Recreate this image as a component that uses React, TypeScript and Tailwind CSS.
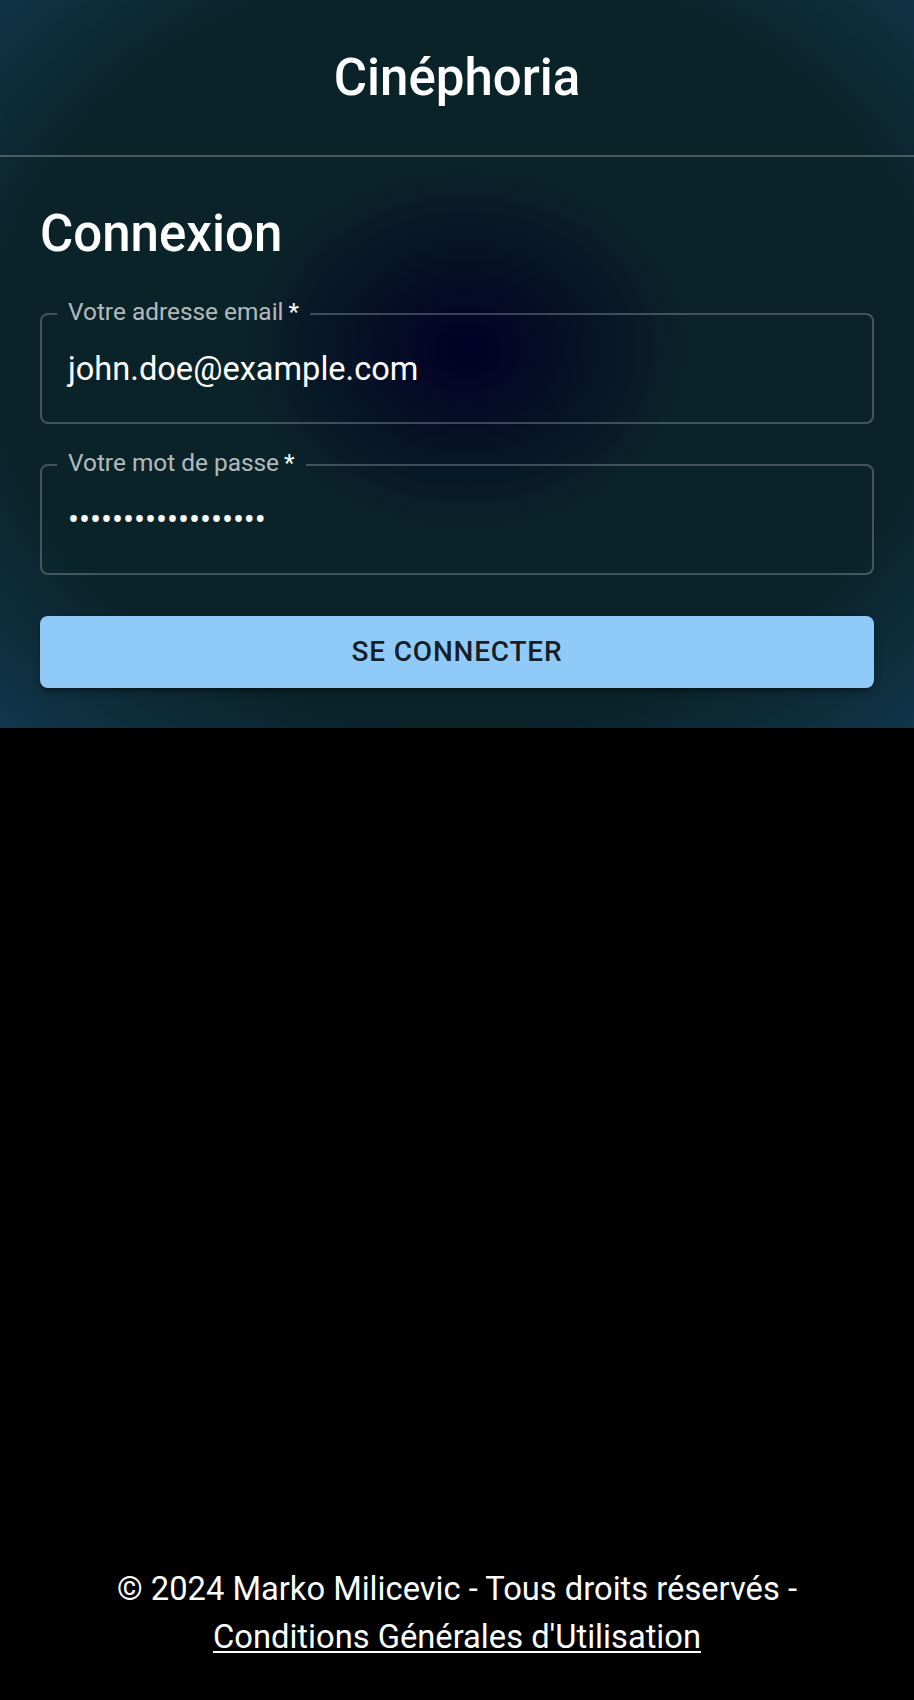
import React from "react";

function Field({ label, value }: { label: string; value: string }) {
  return (
    <fieldset className="m-0 min-w-0 border-2 border-[rgba(255,255,255,0.23)] rounded-[8px] px-[15px] pt-[19px] pb-[29px]">
      <legend className="px-[11px] text-[24.4px] leading-[24px] text-[rgba(255,255,255,0.7)]">
        <span className="relative top-[-2px]">
          {label}
          <span className="text-white">{"\u2009*"}</span>
        </span>
      </legend>
      <div className="pl-[11px] text-[32.6px] leading-[48px] text-white whitespace-nowrap">{value}</div>
    </fieldset>
  );
}

export default function App() {
  return (
    <div className="min-h-screen flex flex-col bg-black text-white font-['Roboto',sans-serif]">
      <div className="bg-[radial-gradient(ellipse_at_51%_48%,#020024_0%,#0a2329_34%,#0a2329_70%,#12364c_100%)]">
        <header className="h-[157px] border-b-2 border-[rgba(255,255,255,0.25)] flex items-center justify-center">
          <h1 className="text-[51px] leading-[64px] font-medium">Cinéphoria</h1>
        </header>
        <main className="px-[40px] pt-[45px] pb-[40px]">
          <h2 className="text-[51px] leading-[64px] font-medium">Connexion</h2>
          <div className="mt-[36px]">
            <Field label="Votre adresse email" value="john.doe@example.com" />
          </div>
          <div className="mt-[29px]">
            <Field label="Votre mot de passe" value={"\u2022".repeat(18)} />
          </div>
          <button
            type="button"
            className="mt-[41px] w-full h-[72px] rounded-[8px] bg-[#90caf9] text-[rgba(0,0,0,0.87)] text-[28px] font-medium uppercase tracking-[0.8px] flex items-center justify-center shadow-[0_6px_2px_-4px_rgba(0,0,0,0.2),0_4px_4px_0_rgba(0,0,0,0.14),0_2px_10px_0_rgba(0,0,0,0.12)]"
          >
            Se connecter
          </button>
        </main>
      </div>
      <div className="flex-1" />
      <footer className="px-[40px] pb-[39px] text-center text-[32.7px] leading-[48px] text-white">
        <span>© 2024 Marko Milicevic - Tous droits réservés -</span>
        <br />
        <a href="#" className="underline decoration-2 underline-offset-[3px] text-white">
          Conditions Générales d'Utilisation
        </a>
      </footer>
    </div>
  );
}
